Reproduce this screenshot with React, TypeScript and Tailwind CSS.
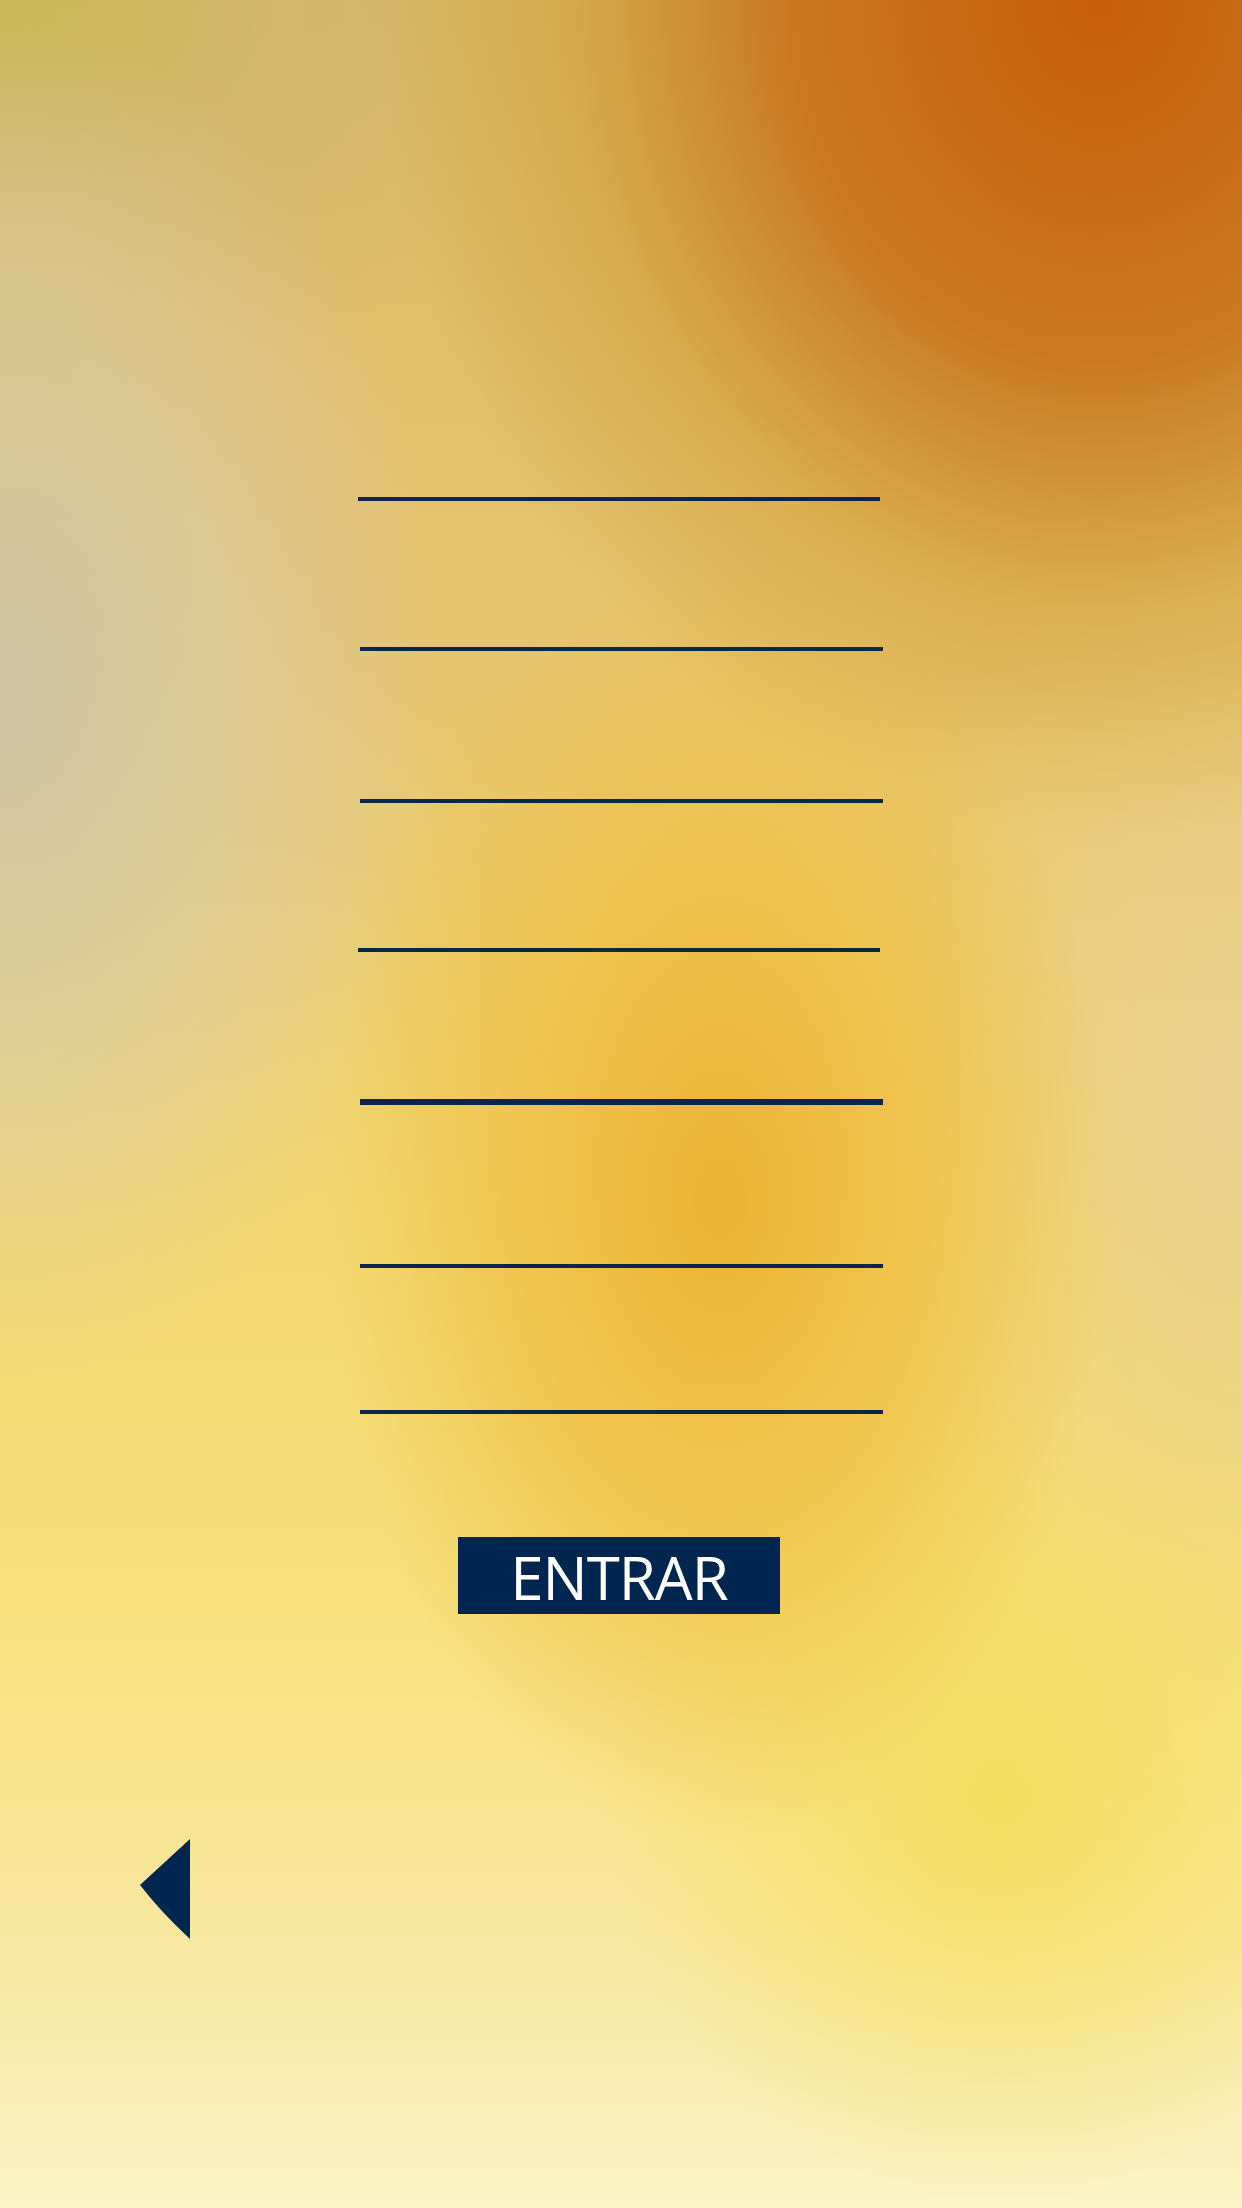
import React from "react"

const lines = [
  { mt: "mt-[497px]", ml: "ml-[358px]", w: "w-[522px]", h: "h-[4px]" },
  { mt: "mt-[146px]", ml: "ml-[360px]", w: "w-[523px]", h: "h-[4px]" },
  { mt: "mt-[148px]", ml: "ml-[360px]", w: "w-[523px]", h: "h-[4px]" },
  { mt: "mt-[145px]", ml: "ml-[358px]", w: "w-[522px]", h: "h-[4px]" },
  { mt: "mt-[147px]", ml: "ml-[360px]", w: "w-[523px]", h: "h-[6px]" },
  { mt: "mt-[159px]", ml: "ml-[360px]", w: "w-[523px]", h: "h-[4px]" },
  { mt: "mt-[142px]", ml: "ml-[360px]", w: "w-[523px]", h: "h-[4px]" },
]

export default function App() {
  return (
    <div
      className="relative w-[1242px] h-[2208px] overflow-hidden font-['Open_Sans',sans-serif] bg-[#f4d86a] bg-[image:radial-gradient(ellipse_820px_950px_at_1100px_0px,#c65c08_0%,rgba(198,110,22,0.85)_38%,rgba(205,150,40,0.45)_64%,rgba(220,170,60,0)_88%),radial-gradient(ellipse_520px_800px_at_0px_700px,rgba(208,196,170,0.95)_0%,rgba(215,205,170,0.6)_45%,rgba(230,215,160,0)_85%),radial-gradient(ellipse_560px_420px_at_0px_0px,rgba(200,184,88,1)_0%,rgba(205,185,110,0.6)_50%,rgba(215,190,110,0)_100%),radial-gradient(ellipse_460px_760px_at_720px_1200px,rgba(236,180,50,1)_0%,rgba(238,188,60,0.65)_45%,rgba(240,200,80,0)_85%),radial-gradient(ellipse_500px_500px_at_1000px_1800px,rgba(242,222,90,0.9)_0%,rgba(242,222,100,0)_80%),radial-gradient(ellipse_400px_700px_at_1242px_1100px,rgba(230,208,145,0.9)_0%,rgba(230,208,145,0)_90%),linear-gradient(to_bottom,#d9b868_0%,#e6c470_30%,#f2d872_55%,#f6e07c_72%,#f8e8a0_88%,#fbf2c6_100%)]"
    >
      <div className="flex flex-col">
        {lines.map((l, i) => (
          <div key={i} className={`${l.mt} ${l.ml} ${l.w} ${l.h} bg-[#0a2748]`} />
        ))}

        <button className="mt-[123px] ml-[458px] w-[322px] h-[77px] bg-[#00264f] flex items-center justify-center">
          <span className="text-white text-[60px] leading-none tracking-[-1px] pt-[2px]">ENTRAR</span>
        </button>

        <div className="mt-[225px] ml-[140px] w-[50px] h-[100px]">
          <svg width="50" height="100" viewBox="0 0 50 100">
            <path d="M50 0 L0 46 Q 20 72 50 100 Z" fill="#00264f" />
          </svg>
        </div>
      </div>
    </div>
  )
}
